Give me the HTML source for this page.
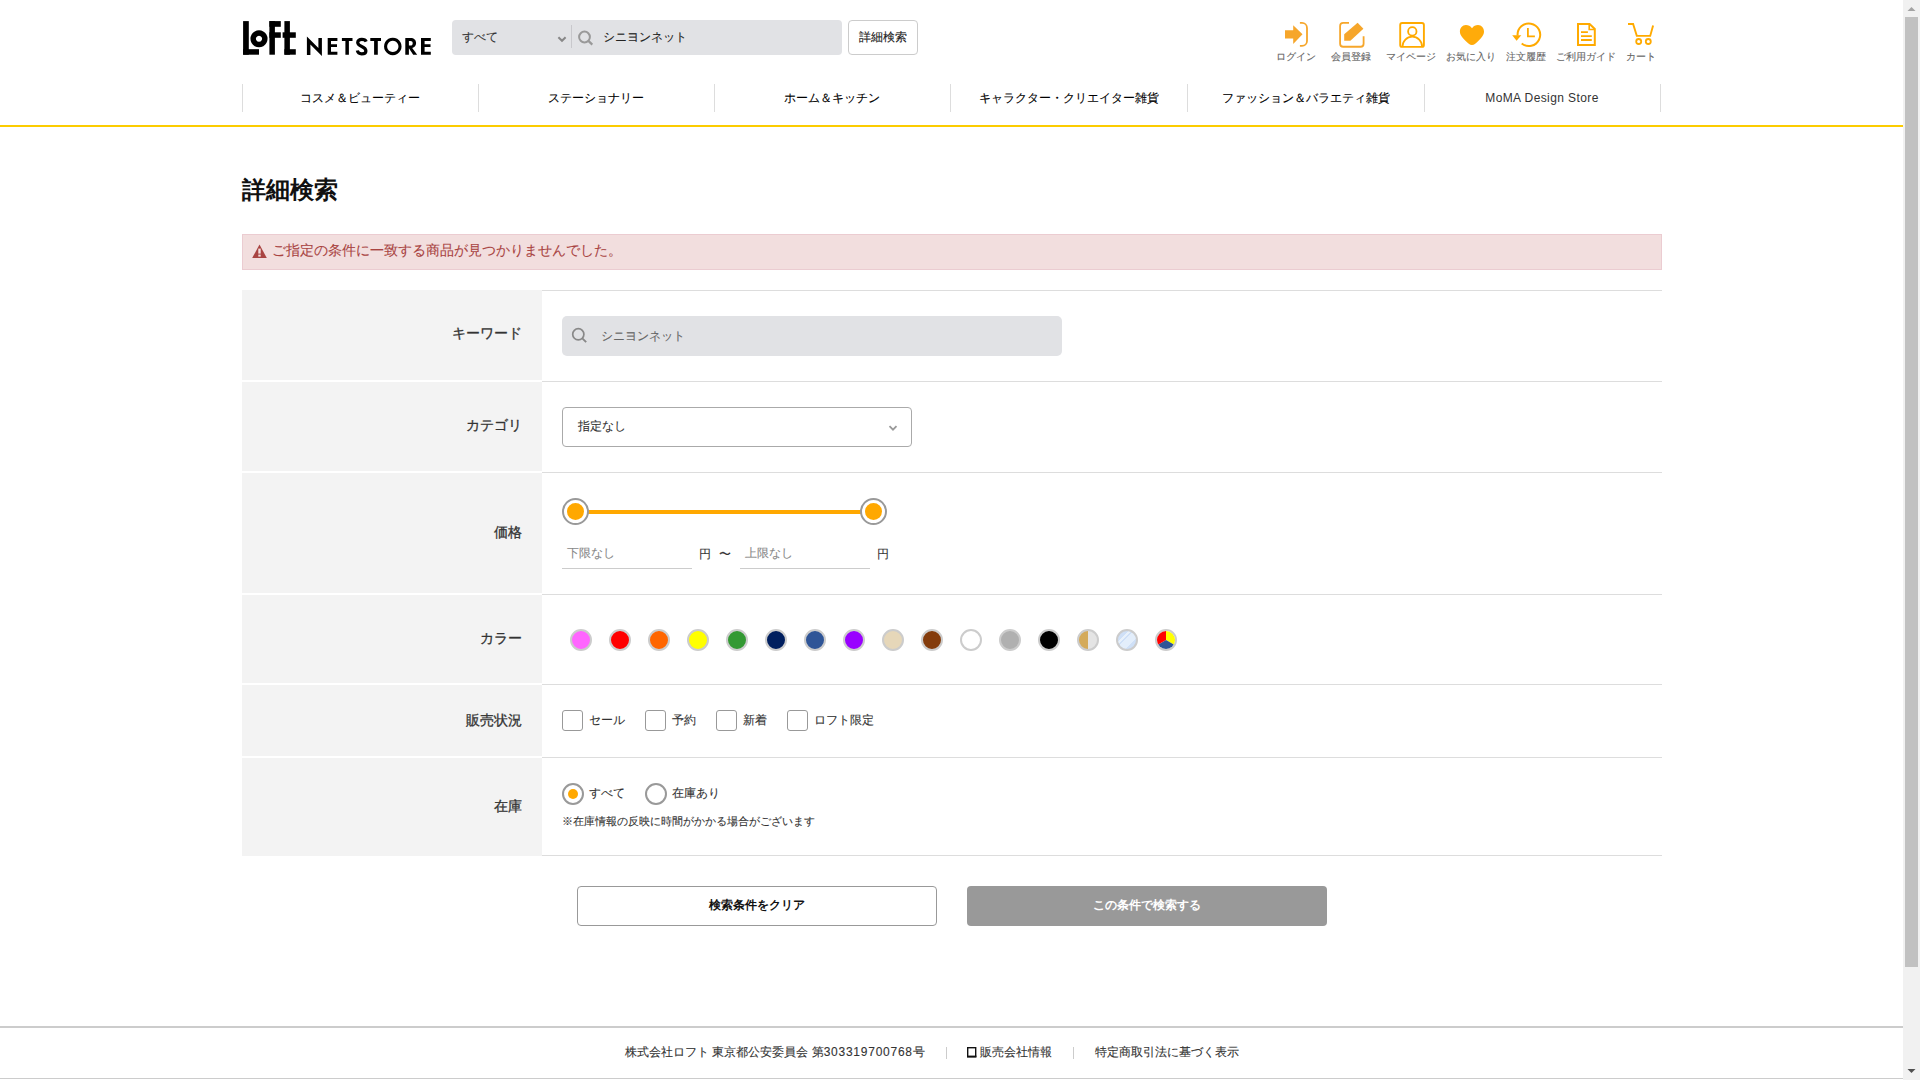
<!DOCTYPE html>
<html lang="ja">
<head>
<meta charset="utf-8">
<style>
*{margin:0;padding:0;box-sizing:border-box}
html,body{width:1920px;height:1080px;overflow:hidden;background:#fff}
body{font-family:"Liberation Sans",sans-serif;color:#333;position:relative;-webkit-text-stroke-width:0.1px}
.a{position:absolute;white-space:nowrap}
.t12{font-size:12px;line-height:12px}
.t13{font-size:13px;line-height:13px}
.t14{font-size:14px;line-height:14px}
.nav-d{position:absolute;top:84px;width:1px;height:28px;background:#ddd}
.nav-t{position:absolute;top:92px;font-size:12px;line-height:12px;color:#000;text-align:center;width:236px}
.lbl{position:absolute;left:242px;width:280px;text-align:right;font-size:14px;line-height:14px;font-weight:normal;color:#333;-webkit-text-stroke-width:0.3px}
.row{position:absolute;left:242px;width:300px;background:#f3f3f3}
.bd{position:absolute;left:542px;width:1120px;height:1px;background:#ddd}
.sw{position:absolute;top:629px;width:22px;height:22px;border-radius:50%;border:2px solid #ccc}
.cb{position:absolute;top:710px;width:21px;height:21px;border:1px solid #999;border-radius:3px;background:#fff}
.hl{position:absolute;top:52px;font-size:10px;line-height:10px;color:#666;text-align:center;width:80px}
</style>
</head>
<body>
<!-- logo -->
<svg class="a" style="left:0;top:0" width="460" height="70" viewBox="0 0 460 70">
  <g fill="#000">
    <rect x="243.1" y="21.1" width="5.7" height="33.6"/>
    <rect x="243.1" y="49.2" width="15.9" height="5.5"/>
    <path fill-rule="evenodd" d="M259,30.25 a8.55,8.55 0 1,0 0.001,0 Z M259,35.75 a3.05,3.05 0 1,1 -0.001,0 Z"/>
    <rect x="269.4" y="21.1" width="5.5" height="33.6"/>
    <rect x="269.4" y="21.1" width="11.4" height="5.7"/>
    <rect x="269.4" y="32.3" width="11.4" height="5.5"/>
    <rect x="284.4" y="21.1" width="5.5" height="33.6"/>
    <rect x="282.6" y="32.3" width="13.2" height="5.5"/>
    <rect x="284.4" y="49.2" width="11.4" height="5.5"/>
    <!-- NETSTORE -->
    <path d="M306.9,36.4 L318.4,47.9 L318.4,38 L321.9,38 L321.9,55.9 L310.4,44.6 L310.4,55 L306.9,55 Z"/>
    <path d="M327.7,38 H337.4 V40.9 H331 V44.2 H337 V47 H331 V51.8 H337.4 V54.8 H327.7 Z"/>
    <path d="M341.9,38 H352.5 V40.9 H348.9 V54.8 H345.4 V40.9 H341.9 Z"/>
    <path d="M370.3,38 H381 V40.9 H377.8 V54.8 H374.1 V40.9 H370.3 Z"/>
    <path fill-rule="evenodd" d="M392.8,37.7 a8.75,8.75 0 1,0 0.001,0 Z M392.8,40.8 a5.65,5.65 0 1,1 -0.001,0 Z"/>
    <path d="M405.3,38 H410.5 C414,38 416.1,40 416.1,43.1 C416.1,45.6 414.6,47.4 412.2,47.9 L417.2,54.8 H413.2 L408.9,48.3 V54.8 H405.3 Z M408.9,40.9 V45.6 H410.3 C411.9,45.6 412.7,44.7 412.7,43.2 C412.7,41.8 411.9,40.9 410.3,40.9 Z"/>
    <path d="M421,38 H430.8 V40.9 H424.6 V44.2 H430.5 V47 H424.6 V51.8 H430.8 V54.8 H421 Z"/>
  </g>
  <path d="M366.2,41.6 C365.5,39.9 363.9,39.3 361.8,39.3 C359.3,39.3 357.7,40.8 357.7,42.6 C357.7,44.6 359.4,45.5 361.7,46.4 C364.4,47.5 365.9,48.7 365.9,50.9 C365.9,52.7 364.1,53.8 361.6,53.8 C359.3,53.8 357.8,52.6 357.3,50.5" fill="none" stroke="#000" stroke-width="3.2"/>
</svg>

<!-- header search -->
<div class="a" style="left:452px;top:20px;width:390px;height:35px;background:#e1e2e5;border-radius:4px"></div>
<div class="a t12" style="left:462px;top:31px;color:#333">すべて</div>
<svg class="a" style="left:556px;top:34px" width="12" height="10" viewBox="0 0 12 10"><path d="M2.4,3.2 L6,6.8 L9.6,3.2" fill="none" stroke="#888" stroke-width="2"/></svg>
<div class="a" style="left:571px;top:25px;width:1px;height:23px;background:#c8c8cc"></div>
<svg class="a" style="left:576px;top:29px" width="20" height="18" viewBox="0 0 20 18"><circle cx="8.5" cy="8" r="5.4" fill="none" stroke="#999" stroke-width="2"/><path d="M12.4,11.9 L16.3,15.6" stroke="#999" stroke-width="2.2"/></svg>
<div class="a t12" style="left:603px;top:31px;color:#222">シニヨンネット</div>
<div class="a" style="left:848px;top:20px;width:70px;height:35px;border:1px solid #ccc;border-radius:4px;background:#fff"></div>
<div class="a t12" style="left:859px;top:31px;color:#222">詳細検索</div>

<!-- header icons -->
<svg class="a" style="left:1270px;top:15px" width="400" height="38" viewBox="1270 15 400 38">
  <g fill="#f6a62b">
    <path d="M1285,30.2 H1293.2 V25.2 L1302.5,34.3 L1293.2,43.9 V38.4 H1285 Z"/>
  </g>
  <path d="M1299.9,22.9 H1302 A5,5 0 0,1 1307,27.9 V40.9 A5,5 0 0,1 1302,45.9 H1299.9" fill="none" stroke="#f6a62b" stroke-width="1.8"/>
  <path d="M1349,22.9 H1343.2 Q1340.1,22.9 1340.1,26 V43.7 Q1340.1,46.75 1343.2,46.75 H1360.6 Q1363.6,46.75 1363.6,43.7 V36.2" fill="none" stroke="#f6a62b" stroke-width="1.8"/>
  <path d="M1344.2,34.3 L1357.6,22.8 L1363.4,28.8 L1350.4,40.8 H1344.2 Z" fill="#f6a62b"/>
  <rect x="1400.2" y="23" width="23.7" height="23.9" rx="2" fill="none" stroke="#ffaa00" stroke-width="1.9"/>
  <circle cx="1412.3" cy="31.4" r="4.2" fill="none" stroke="#ffaa00" stroke-width="1.8"/>
  <path d="M1402.5,46.5 A9.8,9.8 0 0,1 1422.1,46.5" fill="none" stroke="#ffaa00" stroke-width="1.8"/>
  <path d="M1472,28.2 C1470.5,25.9 1468.3,24.9 1465.9,24.9 C1462.3,24.9 1459.9,27.9 1459.9,31.4 C1459.9,35.3 1463,38.3 1466.5,41.7 C1468.5,43.6 1469.6,44.9 1472,44.9 C1474.4,44.9 1475.5,43.6 1477.5,41.7 C1481,38.3 1484,35.3 1484,31.4 C1484,27.9 1481.6,24.9 1478,24.9 C1475.6,24.9 1473.5,25.9 1472,28.2 Z" fill="#ffab0a"/>
  <path d="M1517.6,35.6 A11.3,11.3 0 1,1 1521.7,43.5" fill="none" stroke="#ffaa00" stroke-width="2"/>
  <path d="M1512.2,35.3 H1521.3 L1516.6,40.8 Z" fill="#ffaa00"/>
  <path d="M1527.9,28.1 V36.4 H1534.9" fill="none" stroke="#ffaa00" stroke-width="1.8"/>
  <path d="M1578,24 H1589.6 L1594.8,29 V45 H1578 Z" fill="none" stroke="#ffaa00" stroke-width="2"/>
  <path d="M1589.2,24.5 V29.5 H1594.5" fill="none" stroke="#ffaa00" stroke-width="1.6"/>
  <path d="M1581,32.1 H1587.9 M1581,36.1 H1591.8 M1581,40 H1591.8" stroke="#ffaa00" stroke-width="1.8"/>
  <path d="M1628,24 H1633.1 L1636.8,35.9 H1650.2 L1653.1,25.6" fill="none" stroke="#ffaa00" stroke-width="1.9"/>
  <circle cx="1638.7" cy="41.5" r="2.5" fill="none" stroke="#ffaa00" stroke-width="1.8"/>
  <circle cx="1648.3" cy="41.5" r="2.5" fill="none" stroke="#ffaa00" stroke-width="1.8"/>
</svg>
<div class="hl" style="left:1256px">ログイン</div>
<div class="hl" style="left:1311px">会員登録</div>
<div class="hl" style="left:1371px">マイページ</div>
<div class="hl" style="left:1431px">お気に入り</div>
<div class="hl" style="left:1486px">注文履歴</div>
<div class="hl" style="left:1546px">ご利用ガイド</div>
<div class="hl" style="left:1601px">カート</div>

<!-- nav -->
<div class="nav-d" style="left:242px"></div>
<div class="nav-d" style="left:478px"></div>
<div class="nav-d" style="left:714px"></div>
<div class="nav-d" style="left:950px"></div>
<div class="nav-d" style="left:1187px"></div>
<div class="nav-d" style="left:1424px"></div>
<div class="nav-d" style="left:1660px"></div>
<div class="nav-t" style="left:242px">コスメ＆ビューティー</div>
<div class="nav-t" style="left:478px">ステーショナリー</div>
<div class="nav-t" style="left:714px">ホーム＆キッチン</div>
<div class="nav-t" style="left:951px">キャラクター・クリエイター雑貨</div>
<div class="nav-t" style="left:1188px">ファッション＆バラエティ雑貨</div>
<div class="nav-t" style="left:1424px;letter-spacing:0.4px;-webkit-text-stroke-width:0;color:#333">MoMA Design Store</div>
<div class="a" style="left:0;top:125px;width:1903px;height:2px;background:#fccc00"></div>

<!-- title -->
<div class="a" style="left:242px;top:178px;font-size:24px;line-height:24px;font-weight:bold;color:#111;-webkit-text-stroke-width:0">詳細検索</div>

<!-- alert -->
<div class="a" style="left:242px;top:234px;width:1420px;height:36px;background:#f2dede;border:1px solid #ebccd1"></div>
<svg class="a" style="left:251px;top:243px" width="17" height="17" viewBox="0 0 17 17"><path d="M8.5,1.5 L15.8,15 H1.2 Z" fill="#a94442"/><rect x="7.3" y="5.6" width="2.4" height="5" fill="#f2dede"/><rect x="7.3" y="11.6" width="2.4" height="2" fill="#f2dede"/></svg>
<div class="a t14" style="left:272px;top:243px;color:#a94442">ご指定の条件に一致する商品が見つかりませんでした。</div>

<!-- table -->
<div class="row" style="top:290px;height:90px"></div>
<div class="row" style="top:382px;height:89px"></div>
<div class="row" style="top:473px;height:120px"></div>
<div class="row" style="top:595px;height:88px"></div>
<div class="row" style="top:685px;height:71px"></div>
<div class="row" style="top:758px;height:98px"></div>
<div class="bd" style="top:290px"></div>
<div class="bd" style="top:381px"></div>
<div class="bd" style="top:472px"></div>
<div class="bd" style="top:594px"></div>
<div class="bd" style="top:684px"></div>
<div class="bd" style="top:757px"></div>
<div class="bd" style="top:855px"></div>

<div class="lbl" style="top:326px">キーワード</div>
<div class="lbl" style="top:418px">カテゴリ</div>
<div class="lbl" style="top:525px">価格</div>
<div class="lbl" style="top:631px">カラー</div>
<div class="lbl" style="top:713px">販売状況</div>
<div class="lbl" style="top:799px">在庫</div>

<!-- keyword -->
<div class="a" style="left:562px;top:316px;width:500px;height:40px;background:#e1e2e5;border-radius:5px"></div>
<svg class="a" style="left:570px;top:326px" width="20" height="20" viewBox="0 0 20 20"><circle cx="8.3" cy="8.3" r="5.6" fill="none" stroke="#888" stroke-width="1.7"/><path d="M12.3,12.3 L16.2,16.2" stroke="#888" stroke-width="1.9"/></svg>
<div class="a t12" style="left:601px;top:330px;color:#666">シニヨンネット</div>

<!-- category -->
<div class="a" style="left:562px;top:407px;width:350px;height:40px;border:1px solid #aaa;border-radius:4px;background:#fff"></div>
<div class="a t12" style="left:578px;top:420px;color:#333">指定なし</div>
<svg class="a" style="left:886px;top:422px" width="14" height="12" viewBox="0 0 14 12"><path d="M3.5,4.2 L7,7.7 L10.5,4.2" fill="none" stroke="#999" stroke-width="1.8"/></svg>

<!-- price -->
<div class="a" style="left:576px;top:510px;width:297px;height:4px;background:#ffa800"></div>
<div class="a" style="left:562px;top:498px;width:27px;height:27px;border-radius:50%;border:2px solid #999;background:#fff"></div>
<div class="a" style="left:567px;top:503px;width:17px;height:17px;border-radius:50%;background:#ffa800"></div>
<div class="a" style="left:860px;top:498px;width:27px;height:27px;border-radius:50%;border:2px solid #999;background:#fff"></div>
<div class="a" style="left:865px;top:503px;width:17px;height:17px;border-radius:50%;background:#ffa800"></div>
<div class="a t12" style="left:567px;top:547px;color:#888">下限なし</div>
<div class="a" style="left:562px;top:568px;width:130px;height:1px;background:#ccc"></div>
<div class="a t12" style="left:699px;top:548px;color:#333">円</div>
<div class="a t12" style="left:719px;top:548px;color:#333">〜</div>
<div class="a t12" style="left:745px;top:547px;color:#888">上限なし</div>
<div class="a" style="left:740px;top:568px;width:130px;height:1px;background:#ccc"></div>
<div class="a t12" style="left:877px;top:548px;color:#333">円</div>

<!-- colors -->
<div class="sw" style="left:570px;background:#ff66ff"></div>
<div class="sw" style="left:609px;background:#ff0000"></div>
<div class="sw" style="left:648px;background:#ff6600"></div>
<div class="sw" style="left:687px;background:#ffff00"></div>
<div class="sw" style="left:726px;background:#339933"></div>
<div class="sw" style="left:765px;background:#001f5f"></div>
<div class="sw" style="left:804px;background:#2f5597"></div>
<div class="sw" style="left:843px;background:#9900ff"></div>
<div class="sw" style="left:882px;background:#e6d7b9"></div>
<div class="sw" style="left:921px;background:#843c0c"></div>
<div class="sw" style="left:960px;background:#ffffff"></div>
<div class="sw" style="left:999px;background:#b0b0b0"></div>
<div class="sw" style="left:1038px;background:#000000"></div>
<div class="sw" style="left:1077px;background:linear-gradient(90deg,#d4aa5a 50%,#e4e4e4 50%)"></div>
<div class="sw" style="left:1116px;background:linear-gradient(135deg,#cfe0f7 0%,#cfe0f7 30%,#e8f1fb 30%,#e8f1fb 38%,#cfe0f7 38%,#cfe0f7 44%,#e3eefb 44%,#e3eefb 70%,#cfe0f7 70%)"></div>
<div class="sw" style="left:1155px;overflow:hidden"><svg width="18" height="18" viewBox="-9 -9 18 18" style="display:block"><path d="M0,0 L0,-10 A10,10 0 0,1 8.66,5 Z" fill="#ffff00"/><path d="M0,0 L8.66,5 A10,10 0 0,1 -8.66,5 Z" fill="#2f5597"/><path d="M0,0 L-8.66,5 A10,10 0 0,1 0,-10 Z" fill="#ff0000"/></svg></div>

<!-- sale status -->
<div class="cb" style="left:562px"></div>
<div class="a t12" style="left:589px;top:714px;color:#333">セール</div>
<div class="cb" style="left:645px"></div>
<div class="a t12" style="left:672px;top:714px;color:#333">予約</div>
<div class="cb" style="left:716px"></div>
<div class="a t12" style="left:743px;top:714px;color:#333">新着</div>
<div class="cb" style="left:787px"></div>
<div class="a t12" style="left:814px;top:714px;color:#333">ロフト限定</div>

<!-- stock -->
<div class="a" style="left:562px;top:783px;width:22px;height:22px;border-radius:50%;border:2px solid #999;background:#fff"></div>
<div class="a" style="left:568px;top:789px;width:10px;height:10px;border-radius:50%;background:#ffa800"></div>
<div class="a t12" style="left:589px;top:787px;color:#333">すべて</div>
<div class="a" style="left:645px;top:783px;width:22px;height:22px;border-radius:50%;border:2px solid #999;background:#fff"></div>
<div class="a t12" style="left:672px;top:787px;color:#333">在庫あり</div>
<div class="a" style="left:562px;top:816px;font-size:11px;line-height:11px;color:#333">※在庫情報の反映に時間がかかる場合がございます</div>

<!-- buttons -->
<div class="a" style="left:577px;top:886px;width:360px;height:40px;border:1px solid #999;border-radius:4px;background:#fff"></div>
<div class="a t12" style="left:577px;top:899px;width:360px;text-align:center;font-weight:bold;color:#111;-webkit-text-stroke-width:0">検索条件をクリア</div>
<div class="a" style="left:967px;top:886px;width:360px;height:40px;border-radius:4px;background:#999"></div>
<div class="a t12" style="left:967px;top:899px;width:360px;text-align:center;font-weight:bold;color:#fff;-webkit-text-stroke-width:0">この条件で検索する</div>

<!-- footer -->
<div class="a" style="left:0;top:1026px;width:1903px;height:2px;background:#ccc"></div>
<div class="a t12" style="left:625px;top:1046px;color:#333">株式会社ロフト 東京都公安委員会 第<span style="letter-spacing:0.75px">303319700768</span>号</div>
<div class="a" style="left:946px;top:1047px;width:1px;height:12px;background:#ccc"></div>
<svg class="a" style="left:966px;top:1046px" width="12" height="13" viewBox="0 0 12 13"><rect x="1.7" y="1.7" width="8" height="9" fill="none" stroke="#111" stroke-width="1.4"/><rect x="1" y="9.6" width="9.4" height="1.8" fill="#111"/></svg>
<div class="a t12" style="left:980px;top:1046px;color:#333">販売会社情報</div>
<div class="a" style="left:1073px;top:1047px;width:1px;height:12px;background:#ccc"></div>
<div class="a t12" style="left:1095px;top:1046px;color:#333">特定商取引法に基づく表示</div>
<div class="a" style="left:0;top:1078px;width:1903px;height:1px;background:#ccc"></div>

<!-- scrollbar -->
<div class="a" style="left:1903px;top:0;width:17px;height:1080px;background:#f1f1f1"></div>
<div class="a" style="left:1905px;top:17px;width:13px;height:950px;background:#c1c1c1"></div>
<svg class="a" style="left:1903px;top:0" width="17" height="17" viewBox="0 0 17 17"><path d="M4.5,11 L8.5,7 L12.5,11 Z" fill="#a3a3a3"/></svg>
<svg class="a" style="left:1903px;top:1063px" width="17" height="17" viewBox="0 0 17 17"><path d="M4.5,6 L8.5,10 L12.5,6 Z" fill="#505050"/></svg>
</body>
</html>
